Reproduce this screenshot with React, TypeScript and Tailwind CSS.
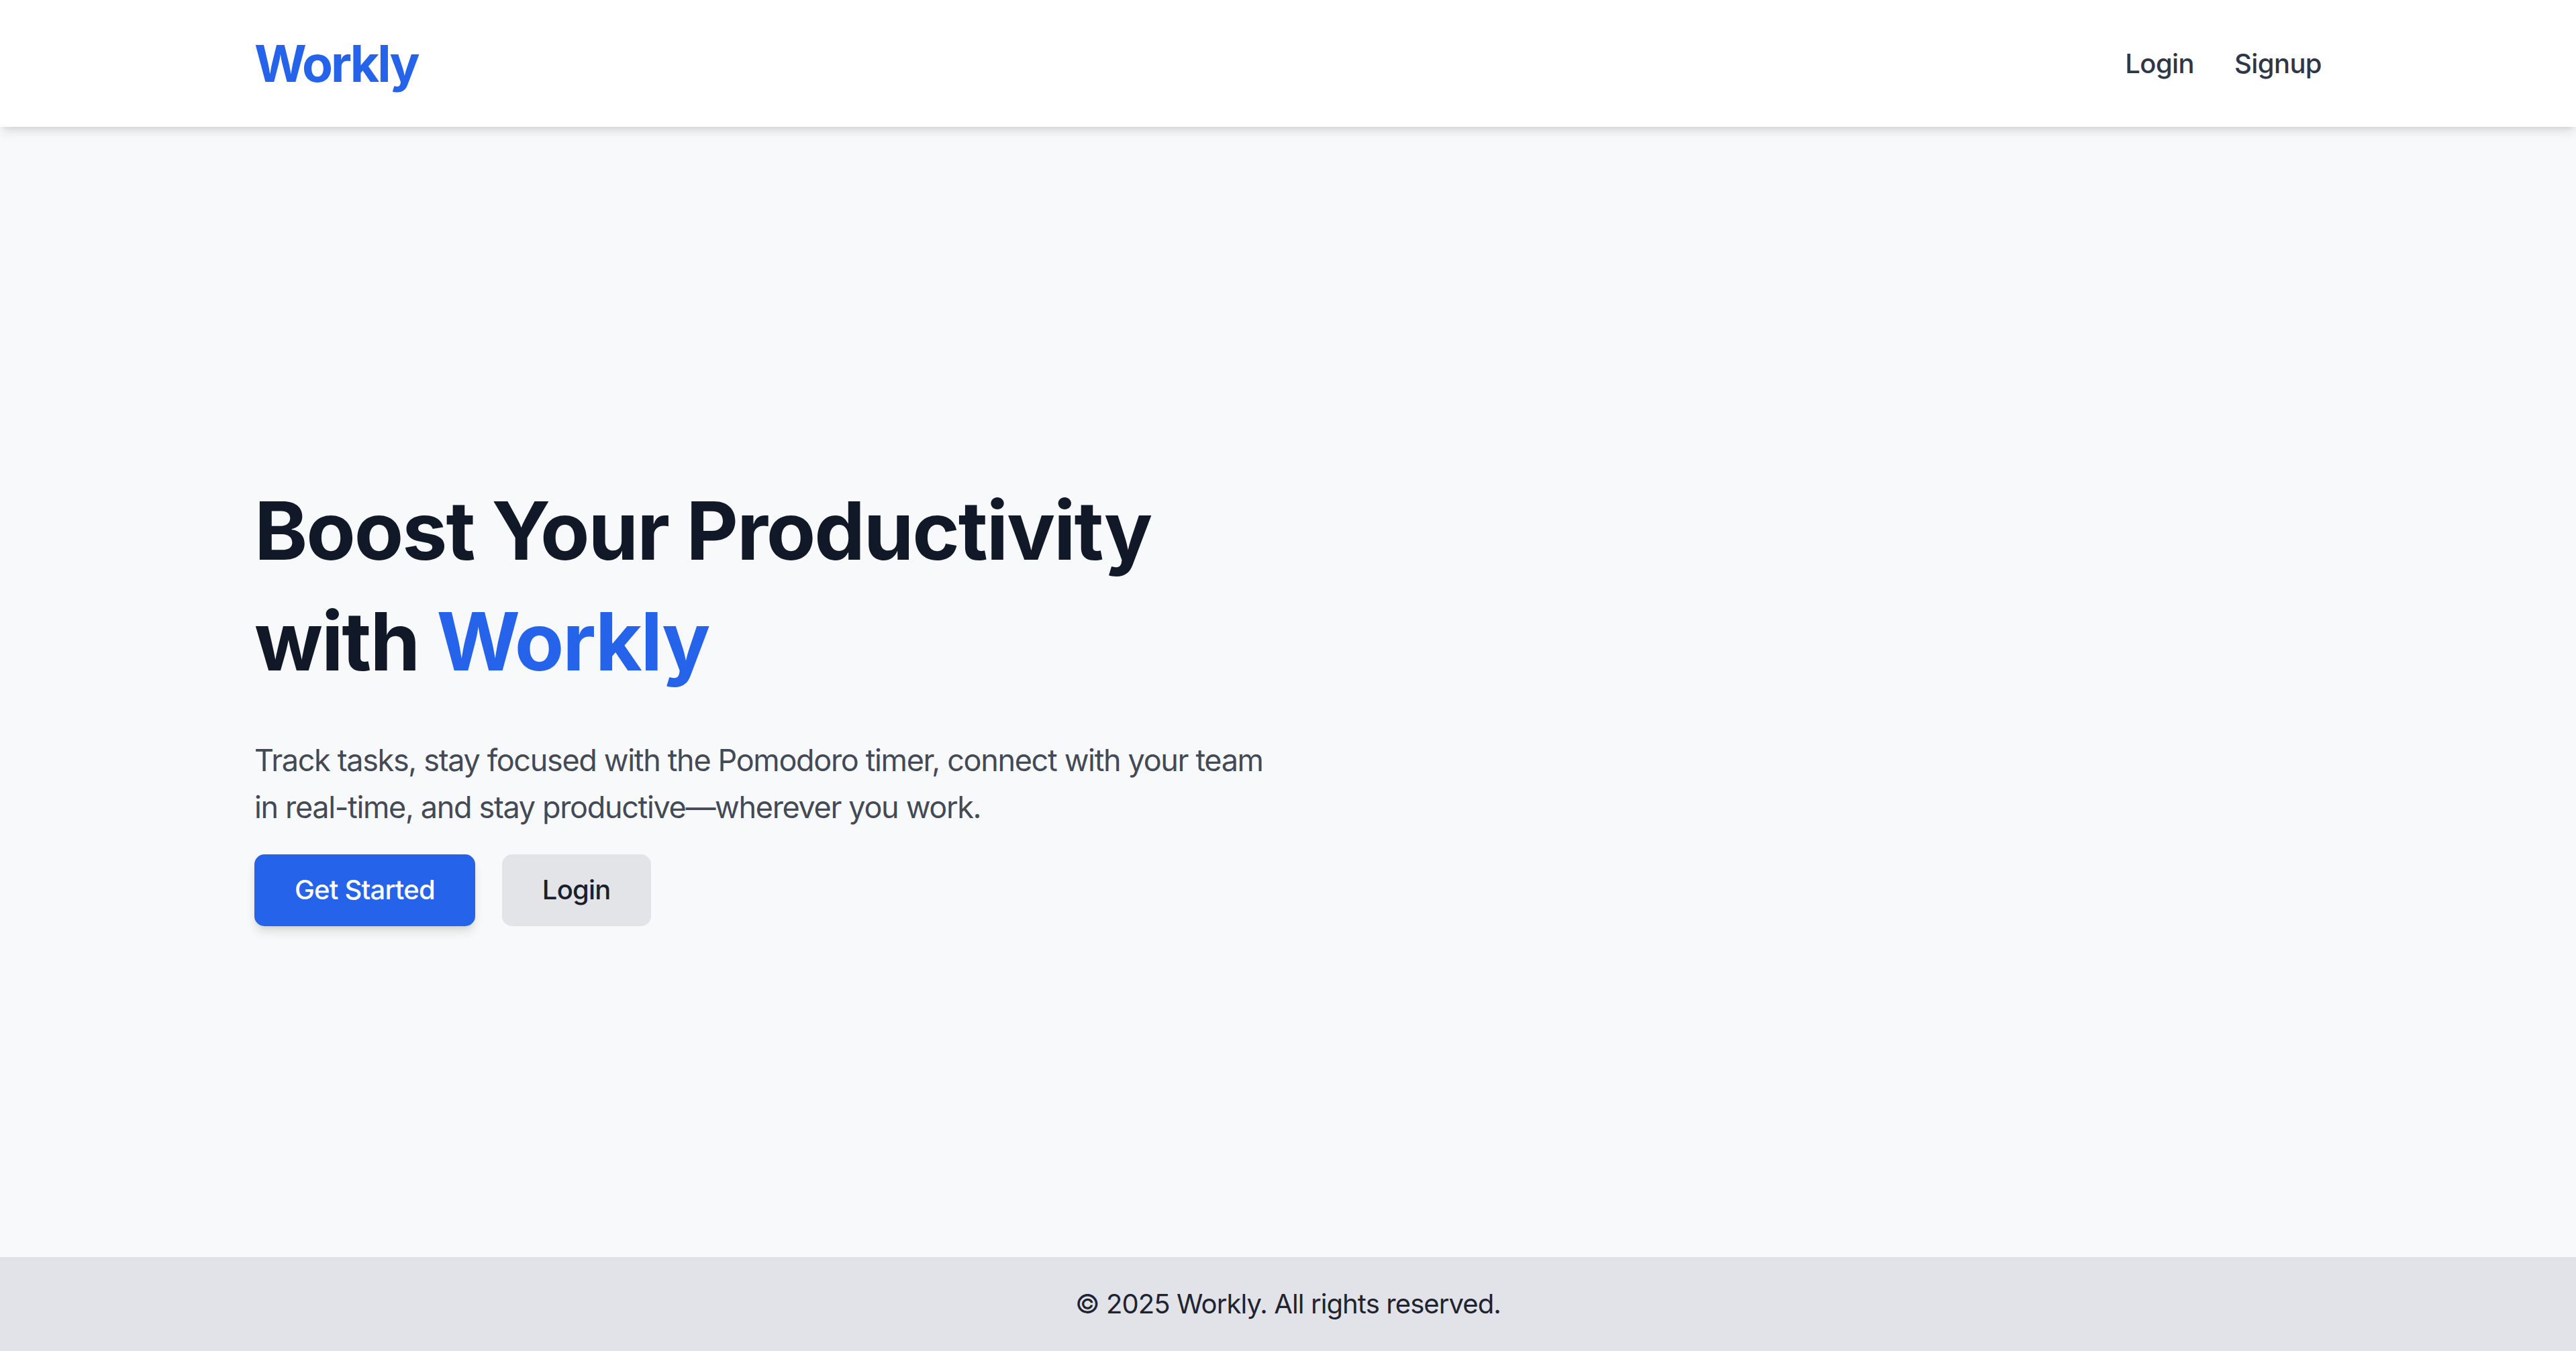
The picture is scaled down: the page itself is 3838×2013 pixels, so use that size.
import React from "react";

export default function App() {
  return (
    <div
      className="min-h-screen flex flex-col bg-[#f8f9fb] text-[#111827]"
      style={{ fontFamily: "Inter, 'Noto Sans', 'Liberation Sans', sans-serif" }}
    >
      <header className="h-[189px] bg-white shadow-[0_10px_15px_-2.5px_rgba(0,0,0,0.1),0_5px_10px_-5px_rgba(0,0,0,0.1)] relative z-10 shrink-0">
        <div className="max-w-[3200px] mx-auto px-[60px] h-full flex items-center justify-between">
          <div className="text-[75px] leading-[90px] font-bold text-[#2563eb] tracking-[-3px]">Workly</div>
          <nav className="flex items-center gap-[60px] text-[40px] leading-[60px] font-medium text-[#2d3748] tracking-[-0.6px]">
            <a className="cursor-pointer">Login</a>
            <a className="cursor-pointer">Signup</a>
          </nav>
        </div>
      </header>

      <main className="flex-1 flex items-center pt-[25px]">
        <div className="max-w-[3200px] w-full mx-auto px-[60px] grid grid-cols-2">
          <div>
            <h1 className="text-[120px] leading-[165px] font-bold text-[#111827] whitespace-nowrap tracking-[-2.1px] mb-[60px]">
              Boost Your Productivity
              <br />
              with <span className="text-[#2563eb]">Workly</span>
            </h1>
            <p className="text-[45px] leading-[70px] text-[#434a56] whitespace-nowrap tracking-[-1.35px] mb-[35px]">
              Track tasks, stay focused with the Pomodoro timer, connect with your team
              <br />
              in real-time, and stay productive—wherever you work.
            </p>
            <div className="flex items-center gap-[40px]">
              <button className="h-[107px] px-[60px] inline-flex items-center rounded-[15px] bg-[#2563eb] text-white text-[40px] font-medium tracking-[-0.8px] shadow-[0_10px_15px_-2.5px_rgba(0,0,0,0.12),0_5px_10px_-5px_rgba(0,0,0,0.1)]">
                Get Started
              </button>
              <button className="h-[107px] px-[60px] inline-flex items-center rounded-[15px] bg-[#e3e4e8] text-[#1a202c] text-[40px] font-medium tracking-[-0.8px]">
                Login
              </button>
            </div>
          </div>
          <div />
        </div>
      </main>

      <footer className="h-[140px] shrink-0 bg-[#e2e3e8] flex items-center justify-center">
        <p className="text-[40px] leading-[60px] text-[#1f2430] tracking-[-0.9px]">© 2025 Workly. All rights reserved.</p>
      </footer>
    </div>
  );
}
